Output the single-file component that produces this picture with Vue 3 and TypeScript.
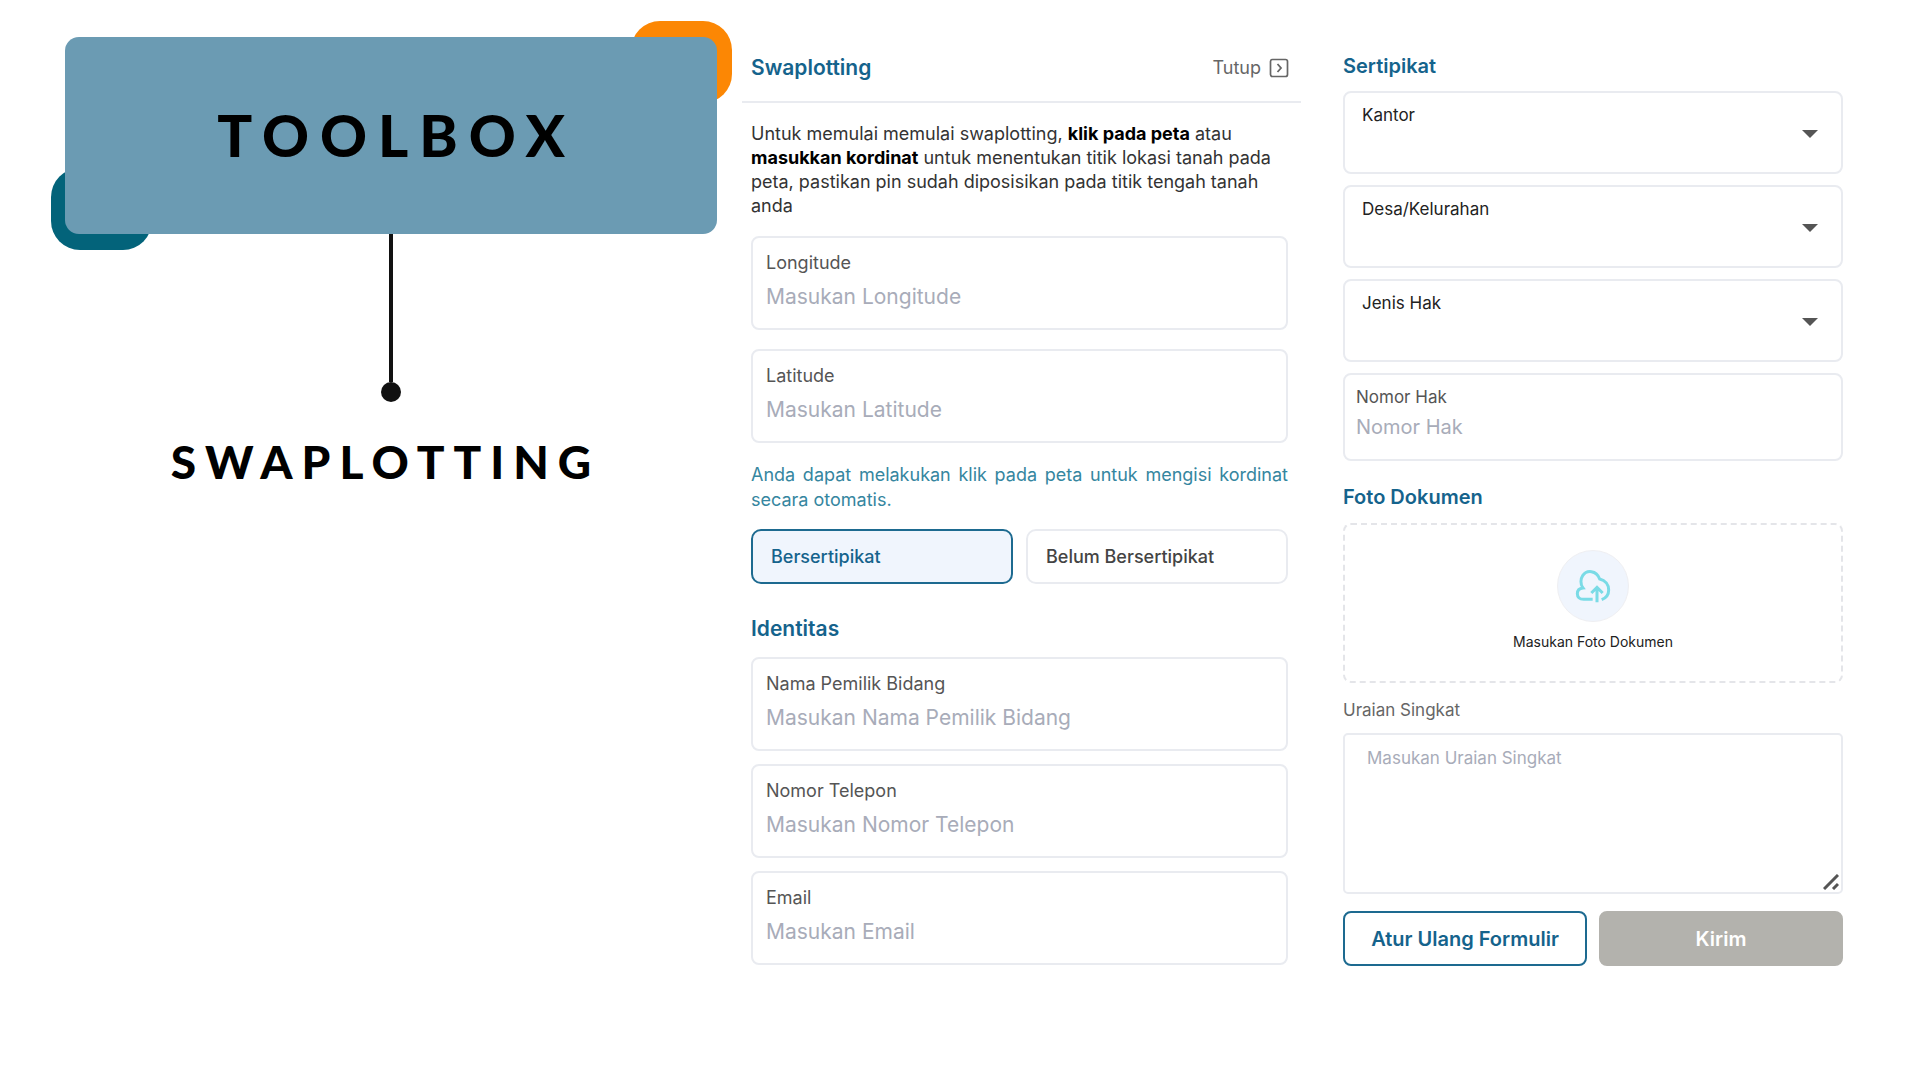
<script setup lang="ts">
import { ref } from 'vue'

interface TextField {
  id: string
  label: string
  placeholder: string
  type: string
}

const coordinateFields: TextField[] = [
  { id: 'longitude', label: 'Longitude', placeholder: 'Masukan Longitude', type: 'text' },
  { id: 'latitude', label: 'Latitude', placeholder: 'Masukan Latitude', type: 'text' },
]

const identityFields: TextField[] = [
  { id: 'owner', label: 'Nama Pemilik Bidang', placeholder: 'Masukan Nama Pemilik Bidang', type: 'text' },
  { id: 'phone', label: 'Nomor Telepon', placeholder: 'Masukan Nomor Telepon', type: 'tel' },
  { id: 'email', label: 'Email', placeholder: 'Masukan Email', type: 'email' },
]

const selectFields = [
  { id: 'office', label: 'Kantor' },
  { id: 'village', label: 'Desa/Kelurahan' },
  { id: 'right-type', label: 'Jenis Hak' },
]

const statuses = ['Bersertipikat', 'Belum Bersertipikat']
const activeStatus = ref(statuses[0])
</script>

<template>
  <main class="page">
    <section class="intro">
      <div class="banner">
        <span class="accent accent-top"></span>
        <span class="accent accent-bottom"></span>
        <h1 class="banner-title">TOOLBOX</h1>
      </div>
      <div class="stem"></div>
      <div class="dot"></div>
      <h2 class="intro-title">SWAPLOTTING</h2>
    </section>

    <section class="panel">
      <header class="panel-head">
        <h3 class="heading heading-large">Swaplotting</h3>
        <button class="close" type="button">
          Tutup
          <svg width="20" height="20" viewBox="0 0 20 20" fill="none" stroke="currentColor">
            <rect x="1.5" y="1.5" width="17" height="17" rx="2" stroke-width="1.7" />
            <path d="M8.5 6l3.5 4-3.5 4" stroke-width="1.8" />
          </svg>
        </button>
      </header>

      <div class="panel-body">
        <p class="lead">
          Untuk memulai memulai swaplotting, <strong>klik pada peta</strong> atau
          <strong>masukkan kordinat</strong> untuk menentukan titik lokasi tanah pada peta,
          pastikan pin sudah diposisikan pada titik tengah tanah anda
        </p>

        <div class="stack stack-wide">
          <div v-for="f in coordinateFields" :key="f.id" class="field">
            <label :for="f.id">{{ f.label }}</label>
            <input :id="f.id" :type="f.type" :placeholder="f.placeholder" />
          </div>
        </div>

        <p class="hint">Anda dapat melakukan klik pada peta untuk mengisi kordinat secara otomatis.</p>

        <div class="toggle">
          <button
            v-for="s in statuses"
            :key="s"
            type="button"
            class="toggle-item"
            :class="{ active: s === activeStatus }"
            :aria-pressed="s === activeStatus"
            @click="activeStatus = s"
          >
            {{ s }}
          </button>
        </div>

        <h3 class="heading heading-large identity">Identitas</h3>
        <div class="stack">
          <div v-for="f in identityFields" :key="f.id" class="field">
            <label :for="f.id">{{ f.label }}</label>
            <input :id="f.id" :type="f.type" :placeholder="f.placeholder" />
          </div>
        </div>
      </div>
    </section>

    <section class="certificate">
      <h3 class="heading">Sertipikat</h3>
      <div class="selects">
        <div v-for="f in selectFields" :key="f.id" class="select-field">
          <select :id="f.id"></select>
          <label :for="f.id">{{ f.label }}</label>
          <svg class="caret" width="16" height="8" viewBox="0 0 16 8">
            <path d="M0 0h16L8 8z" fill="#555" />
          </svg>
        </div>
        <div class="field field-compact">
          <label for="right-number">Nomor Hak</label>
          <input id="right-number" type="text" placeholder="Nomor Hak" />
        </div>
      </div>

      <h3 class="heading photo">Foto Dokumen</h3>
      <label class="upload" for="document">
        <input id="document" type="file" class="file" />
        <span class="upload-icon">
          <svg width="36" height="36" viewBox="0 0 108 108" fill="none" stroke="#7adbe6" stroke-width="9">
            <path d="M53 94H26C13 94 7 86 7 77C7 68 13 61 24 60C15 48 17 32 23 23C35 5 64 6 74 33C91 37 101 50 101 66C101 79 93 90 80 95" />
            <path d="M66 103V59M49 75L66 58L83 75" />
          </svg>
        </span>
        <span class="upload-text">Masukan Foto Dokumen</span>
      </label>

      <label class="area-label" for="summary">Uraian Singkat</label>
      <div class="area">
        <textarea id="summary" placeholder="Masukan Uraian Singkat"></textarea>
        <svg class="grip" width="16" height="16" viewBox="0 0 16 16" stroke="#555" stroke-width="3">
          <path d="M1 15L15 1M10 15l5-5" fill="none" />
        </svg>
      </div>

      <div class="actions">
        <button type="button" class="action outline">Atur Ulang Formulir</button>
        <button type="button" class="action muted">Kirim</button>
      </div>
    </section>
  </main>
</template>

<style>
body {
  margin: 0;
  background: #fff;
}
</style>

<style scoped>
* {
  box-sizing: border-box;
}

.page {
  display: grid;
  grid-template-columns: 652fr 559fr 517fr;
  column-gap: 25px;
  padding: 37px 77px 40px 65px;
  font-family: Inter, "Liberation Sans", sans-serif;
  color: #333;
}

h1,
h2,
h3,
p {
  margin: 0;
}

button,
input,
select,
textarea {
  font-family: inherit;
}

/* Left column */
.intro {
  display: flex;
  flex-direction: column;
  align-items: center;
  font-family: Lato, sans-serif;
  color: #000;
}

.banner {
  position: relative;
  z-index: 0;
  align-self: stretch;
  display: flex;
  height: 197px;
}

.banner-title {
  flex: 1;
  display: flex;
  align-items: center;
  justify-content: center;
  padding: 0 0 2px 11px;
  border-radius: 14px;
  background: #6b9bb3;
  font-size: 58px;
  font-weight: 900;
  letter-spacing: 11px;
}

.accent {
  position: absolute;
  z-index: -1;
  width: 101px;
  height: 82px;
  border-radius: 29px;
}

.accent-top {
  top: -16px;
  right: -15px;
  background: #fc8704;
}

.accent-bottom {
  bottom: -16px;
  left: -14px;
  background: #03637a;
}

.stem {
  width: 4px;
  height: 148px;
  background: #111;
}

.dot {
  width: 20px;
  height: 20px;
  border-radius: 50%;
  background: #111;
}

.intro-title {
  margin-top: 32px;
  padding-right: 11px;
  font-size: 46px;
  line-height: 56px;
  font-weight: 900;
  letter-spacing: 9px;
}

/* Shared form parts */
.heading {
  font-size: 20px;
  line-height: 28px;
  font-weight: 600;
  color: #15638c;
}

.heading-large {
  font-size: 21px;
}

.field {
  display: flex;
  flex-direction: column;
  height: 94px;
  padding: 13px 13px;
  border: 2px solid #e9ebf0;
  border-radius: 8px;
}

.field label {
  font-size: 18px;
  line-height: 24px;
  color: #555;
}

.field input {
  width: 100%;
  height: 28px;
  margin-top: 8px;
  padding: 0;
  border: 0;
  outline: 0;
  background: none;
  font-size: 21px;
  line-height: 28px;
}

input::placeholder,
textarea::placeholder {
  color: #a8acb9;
  opacity: 1;
}

.stack {
  display: flex;
  flex-direction: column;
  gap: 13px;
}

.stack-wide {
  gap: 19px;
}

/* Middle column */
.panel-head {
  display: flex;
  align-items: center;
  justify-content: space-between;
  height: 66px;
  padding: 0 12px 2px 9px;
  border-bottom: 2px solid #e9ebf0;
}

.close {
  display: flex;
  align-items: center;
  gap: 8px;
  padding: 0;
  border: 0;
  background: none;
  font-size: 18px;
  line-height: 28px;
  color: #666;
}

.panel-body {
  padding: 19px 13px 0 9px;
}

.lead {
  font-size: 18px;
  line-height: 24px;
  margin-bottom: 18px;
}

.lead strong {
  font-weight: 700;
  color: #000;
}

.hint {
  margin: 19px 0 17px;
  font-size: 18px;
  line-height: 25px;
  text-align: justify;
  color: #3586a0;
}

.toggle {
  display: grid;
  grid-template-columns: 1fr 1fr;
  gap: 13px;
}

.toggle-item {
  height: 55px;
  padding: 0 18px;
  border: 2px solid #e9ebf0;
  border-radius: 10px;
  background: #fff;
  font-size: 18px;
  font-weight: 500;
  text-align: left;
  color: #444;
}

.toggle-item.active {
  border-color: #1d6a90;
  background: #f0f5fd;
  color: #15638c;
}

.identity {
  margin: 31px 0 14px;
}

/* Right column */
.certificate {
  padding: 15px 0 0 17px;
}

.selects {
  display: flex;
  flex-direction: column;
  gap: 11px;
  margin-top: 11px;
}

.select-field {
  display: grid;
  height: 83px;
  border: 2px solid #e9ebf0;
  border-radius: 8px;
}

.select-field > * {
  grid-area: 1 / 1;
}

.select-field select {
  width: 100%;
  height: 100%;
  padding: 32px 48px 8px 17px;
  border: 0;
  outline: 0;
  appearance: none;
  background: none;
  font-size: 18px;
}

.select-field label {
  align-self: start;
  justify-self: start;
  padding: 10px 0 0 17px;
  font-size: 17px;
  line-height: 24px;
  color: #222;
  pointer-events: none;
}

.caret {
  align-self: center;
  justify-self: end;
  margin: 2px 23px 0 0;
  pointer-events: none;
}

.field-compact {
  height: 88px;
  padding: 10px 11px;
}

.field-compact label {
  font-size: 17px;
}

.field-compact input {
  margin-top: 4px;
  font-size: 20px;
}

.photo {
  margin: 22px 0 12px;
}

.upload {
  display: flex;
  flex-direction: column;
  align-items: center;
  height: 160px;
  padding-top: 25px;
  border: 2px dashed #e4e5e9;
  border-radius: 8px;
}

.file {
  position: absolute;
  width: 1px;
  height: 1px;
  opacity: 0;
}

.upload-icon {
  display: flex;
  align-items: center;
  justify-content: center;
  width: 72px;
  height: 72px;
  border: 1px solid #efeff2;
  border-radius: 50%;
  background: #f0f5fd;
}

.upload-text {
  margin-top: 10px;
  font-size: 14px;
  line-height: 20px;
  color: #222;
}

.area-label {
  display: block;
  margin: 15px 0 11px;
  font-size: 17px;
  line-height: 24px;
  color: #666;
}

.area {
  display: grid;
  height: 161px;
  border: 2px solid #e9ebf0;
  border-radius: 5px;
}

.area > * {
  grid-area: 1 / 1;
}

.area textarea {
  width: 100%;
  height: 100%;
  padding: 11px 22px;
  border: 0;
  outline: 0;
  resize: none;
  background: none;
  font-size: 17px;
  line-height: 24px;
}

.grip {
  align-self: end;
  justify-self: end;
  margin: 2px;
}

.actions {
  display: grid;
  grid-template-columns: 1fr 1fr;
  gap: 12px;
  margin-top: 17px;
}

.action {
  height: 55px;
  border: 2px solid #1d6a90;
  border-radius: 8px;
  background: #fff;
  font-size: 20px;
  font-weight: 600;
  color: #15638c;
}

.action.muted {
  border-color: #b3b2ad;
  background: #b3b2ad;
  color: #fff;
}
</style>
